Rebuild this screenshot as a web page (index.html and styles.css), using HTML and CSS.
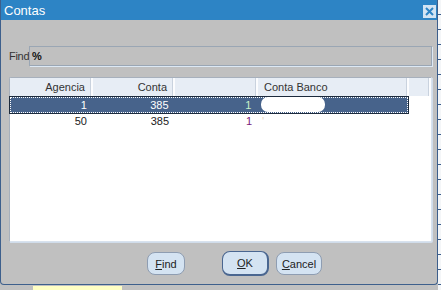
FILE: index.html
```html
<!DOCTYPE html>
<html lang="pt">
<head>
    <meta charset="UTF-8">
    <title>Contas</title>
    <link rel="stylesheet" href="styles.css">
</head>
<body>
    <div class="screen">
        <div class="dialog">
            <div class="titlebar">
                <span class="title">Contas</span>
                <span class="close">
                    <svg width="13" height="13" viewBox="0 0 13 13">
                        <rect x="0" y="0" width="13" height="13" fill="#d3e4f3"/>
                        <path d="M3 3 L10 10 M10 3 L3 10" stroke="#2d84c5" stroke-width="2"/>
                    </svg>
                </span>
            </div>
            <div class="content">
                <div class="find-row">
                    <label class="find-label">Find</label>
                    <div class="find-input">%</div>
                </div>

                <div class="grid">
                    <div class="row head">
                        <div class="cell c1 right">Agencia</div>
                        <div class="cell c2 right">Conta</div>
                        <div class="cell c3"></div>
                        <div class="cell c4">Conta Banco</div>
                        <div class="cell c5"></div>
                    </div>
                    <div class="row selected">
                        <div class="cell c1 right">1</div>
                        <div class="cell c2 right">385</div>
                        <div class="cell c3 right green">1</div>
                        <div class="cell c4"><span class="blot"></span></div>
                    </div>
                    <div class="row">
                        <div class="cell c1 right">50</div>
                        <div class="cell c2 right">385</div>
                        <div class="cell c3 right purple">1</div>
                        <div class="cell c4"><span class="speck">'</span></div>
                    </div>
                </div>

                <div class="buttons">
                    <button class="btn btn-find"><u>F</u>ind</button>
                    <button class="btn btn-ok"><u>O</u>K</button>
                    <button class="btn btn-cancel"><u>C</u>ancel</button>
                </div>
            </div>
        </div>
        <div class="side-strip"></div>
    </div>
    <div class="bottom-strip">
        <div class="yellow-field"></div>
    </div>
</body>
</html>
```

FILE: styles.css
```css
body {
    margin: 0;
    background-color: #c0c0c0;
    font-family: "Liberation Sans", Arial, sans-serif;
    font-size: 11px;
    color: #222;
    width: 441px;
    height: 290px;
    overflow: hidden;
}

.screen {
    display: flex;
}

.dialog {
    width: 436px;
    height: 284px;
    border: 1px solid #3d5f8c;
    border-top: none;
    border-radius: 0 0 4px 4px;
    background-color: #c0c0c0;
    display: flex;
    flex-direction: column;
}

.side-strip {
    width: 3px;
    height: 290px;
    background: repeating-linear-gradient(#f4f6f8 0 14px, #3d5f8c 14px 15px);
}

.titlebar {
    height: 20px;
    background-color: #2d84c5;
    display: flex;
    align-items: center;
    justify-content: space-between;
    padding: 0 1px 0 3px;
}

.title {
    color: #fff;
    font-size: 13px;
}

.close {
    display: flex;
    margin-top: 2px;
}

.content {
    flex: 1;
    padding: 26px 5px 0 8px;
    display: flex;
    flex-direction: column;
}

.find-row {
    display: flex;
    align-items: center;
    height: 20px;
}

.find-label {
    flex: 0 0 auto;
    width: 20px;
    letter-spacing: -0.3px;
    color: #333;
}

.find-input {
    flex: 1;
    height: 18px;
    line-height: 18px;
    border: 1px solid #9aa6b4;
    box-shadow: 1px 1px 0 #dce8f4;
    padding-left: 2px;
    font-weight: bold;
    color: #111;
}

.grid {
    margin-top: 11px;
    width: 421px;
    height: 163px;
    background-color: #fff;
    border: 1px solid #a7b0bc;
    border-right-color: #d8e2ee;
    border-bottom-color: #d8e2ee;
    border-radius: 2px 0 2px 0;
    box-shadow: 1px 1px 0 #d0dcea;
}

.row {
    display: flex;
    height: 16px;
    line-height: 16px;
}

.row.head {
    height: 18px;
    line-height: 18px;
    background-color: #e7edf5;
    border-bottom: 1px solid #fff;
    color: #333;
}

.cell {
    box-sizing: border-box;
    padding: 0 6px;
    white-space: nowrap;
}

.head .cell {
    border-right: 2px solid #fbfcfe;
    box-shadow: inset -1px 0 0 #c9d2de;
}

.right { text-align: right; }

.c1 { width: 83px; }
.c2 { width: 82px; }
.c3 { width: 83px; }
.c4 { width: 151px; }
.c5 { flex: 1; border-right: none; box-shadow: none; }

.row.selected {
    width: 398px;
    background-color: #47638b;
    color: #fff;
    outline: 1px dotted #fff;
    outline-offset: -1px;
    box-shadow: 0 0 0 1px #1c2a3c;
}

.green { color: #c8f0c8; }
.purple { color: #7a1a7a; }

.blot {
    display: inline-block;
    width: 64px;
    height: 15px;
    background-color: #fff;
    border-radius: 7px;
    vertical-align: top;
    margin-left: -2px;
}

.speck {
    color: #e8d8c0;
    margin-left: -2px;
}

.buttons {
    display: flex;
    margin-top: 10px;
    padding-left: 138px;
}

.btn {
    font-family: "Liberation Sans", Arial, sans-serif;
    font-size: 11px;
    color: #222;
    height: 23px;
    background-color: #d4e3f2;
    border: 1px solid #8e9db2;
    border-radius: 8px;
    padding: 0;
}

.btn-find { width: 38px; margin-right: 37px; }
.btn-ok {
    width: 47px;
    height: 25px;
    margin-top: -1px;
    border-color: #4a6690;
    border-width: 1px 2px 2px 1px;
    margin-right: 7px;
}
.btn-cancel { width: 46px; }

.bottom-strip {
    height: 5px;
    margin-top: -4px;
    display: flex;
    background-color: #c0c0c0;
}

.yellow-field {
    margin-left: 33px;
    width: 89px;
    background-color: #ffffc4;
}
```
